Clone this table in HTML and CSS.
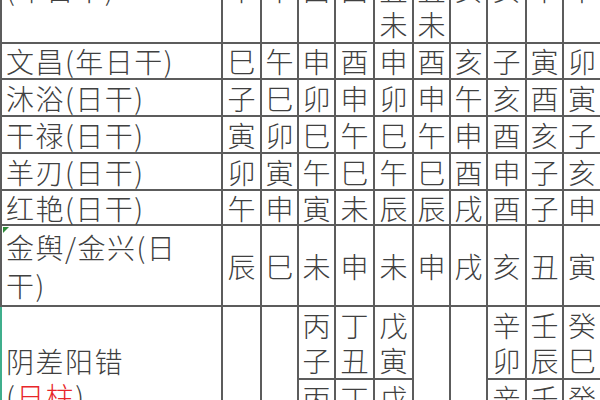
FILE: index.html
```html
<!DOCTYPE html>
<html lang="zh-CN">
<head>
<meta charset="utf-8">
<title>神煞表</title>
<link rel="stylesheet" href="styles.css">
</head>
<body>
<table class="sheet">
  <colgroup>
    <col class="c-label">
    <col class="c39"><col class="c37"><col class="c37"><col class="c39"><col class="c39">
    <col class="c37"><col class="c37"><col class="c39"><col class="c37"><col class="c38">
  </colgroup>
  <tr class="r-head">
    <td class="label">太极贵人<br>(年日干)</td>
    <td>子<br>午</td><td>子<br>午</td><td>卯<br>酉</td><td>卯<br>酉</td>
    <td>辰<br>戌<br>丑<br>未</td><td>辰<br>戌<br>丑<br>未</td>
    <td>寅<br>亥</td><td>寅<br>亥</td><td>巳<br>申</td><td>巳<br>申</td>
  </tr>
  <tr class="r36">
    <td class="label">文昌(年日干)</td>
    <td>巳</td><td>午</td><td>申</td><td>酉</td><td>申</td><td>酉</td><td>亥</td><td>子</td><td>寅</td><td>卯</td>
  </tr>
  <tr class="r37">
    <td class="label">沐浴(日干)</td>
    <td>子</td><td>巳</td><td>卯</td><td>申</td><td>卯</td><td>申</td><td>午</td><td>亥</td><td>酉</td><td>寅</td>
  </tr>
  <tr class="r37">
    <td class="label">干禄(日干)</td>
    <td>寅</td><td>卯</td><td>巳</td><td>午</td><td>巳</td><td>午</td><td>申</td><td>酉</td><td>亥</td><td>子</td>
  </tr>
  <tr class="r37">
    <td class="label">羊刃(日干)</td>
    <td>卯</td><td>寅</td><td>午</td><td>巳</td><td>午</td><td>巳</td><td>酉</td><td>申</td><td>子</td><td>亥</td>
  </tr>
  <tr class="r35">
    <td class="label">红艳(日干)</td>
    <td>午</td><td>申</td><td>寅</td><td>未</td><td>辰</td><td>辰</td><td>戌</td><td>酉</td><td>子</td><td>申</td>
  </tr>
  <tr class="r81">
    <td class="label flagged tall">金舆/金兴(日<br>干)</td>
    <td>辰</td><td>巳</td><td>未</td><td>申</td><td>未</td><td>申</td><td>戌</td><td>亥</td><td>丑</td><td>寅</td>
  </tr>
  <tr class="r73">
    <td class="label selected" rowspan="2">阴差阳错<br>(<span class="red">日柱</span>)</td>
    <td rowspan="2"></td><td rowspan="2"></td>
    <td>丙<br>子</td><td>丁<br>丑</td><td>戊<br>寅</td>
    <td rowspan="2"></td><td rowspan="2"></td>
    <td>辛<br>卯</td><td>壬<br>辰</td><td>癸<br>巳</td>
  </tr>
  <tr class="r73">
    <td>丙<br>午</td><td>丁<br>未</td><td>戊<br>申</td>
    <td>辛<br>酉</td><td>壬<br>戌</td><td>癸<br>亥</td>
  </tr>
</table>
</body>
</html>
```

FILE: styles.css
```css
html, body {
  margin: 0;
  padding: 0;
  background: #ffffff;
  overflow: hidden;
}

.sheet {
  border-collapse: collapse;
  table-layout: fixed;
  width: 602px;
  margin-top: -100px;
  font-family: "Noto Sans CJK SC", "Noto Sans", sans-serif;
  font-weight: 300;
  font-size: 28px;
  line-height: 32px;
  color: #404040;
}

.c-label { width: 221px; }
.c39 { width: 39px; }
.c37 { width: 37px; }
.c38 { width: 38px; }

.sheet td {
  border: 2px solid #5c5c5c;
  padding: 0;
  text-align: center;
  vertical-align: middle;
  box-sizing: border-box;
  white-space: nowrap;
}

.sheet td.label {
  text-align: left;
  padding-left: 4px;
  letter-spacing: 1.5px;
}

.r-head td { height: 142px; line-height: 35px; }
.r36 td { height: 36px; }
.r37 td { height: 37px; }
.r35 td { height: 35px; }
.r81 td { height: 81px; }
.r73 td { height: 73px; line-height: 35px; }
.sheet td.tall { line-height: 38px; }

.flagged { position: relative; }
.flagged::before {
  content: "";
  position: absolute;
  left: 1px;
  top: 1px;
  border-top: 6px solid #2e8b3a;
  border-right: 6px solid transparent;
}

.sheet td.selected {
  border-left-color: #3fae8c;
}

.red { color: #e8262a; }
```
